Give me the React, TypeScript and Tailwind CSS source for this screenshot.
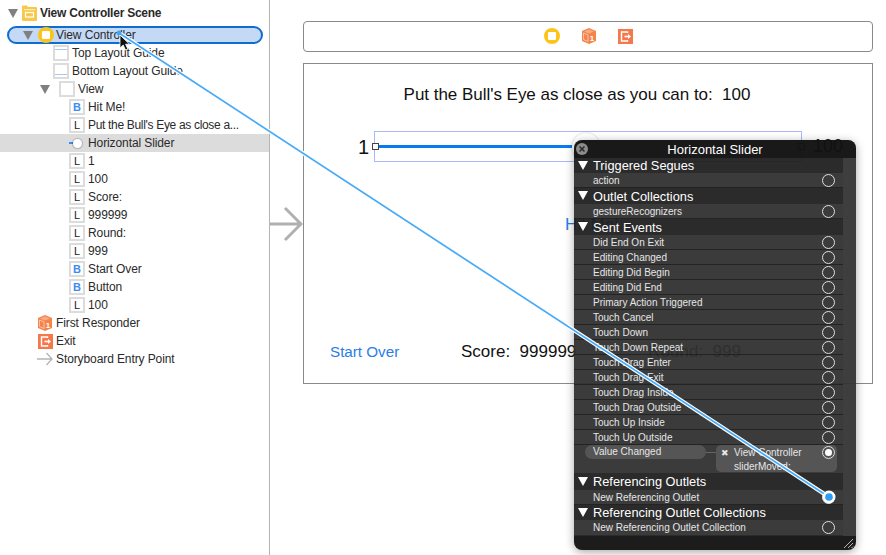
import React from 'react';

const Tri = ({ className = 'text-[#808080]' }: { className?: string }) => (
  <svg width="10" height="9" viewBox="0 0 10 9" className={`shrink-0 ${className}`}>
    <polygon points="0,0 10,0 5,9" fill="currentColor" />
  </svg>
);

const VcIcon = () => (
  <span className="w-[16px] h-[16px] shrink-0 rounded-full bg-[#fcc419] flex items-center justify-center">
    <span className="w-[8px] h-[8px] bg-white rounded-[1px]" />
  </span>
);

const CubeIcon = () => (
  <svg width="16" height="16" viewBox="0 0 16 16" className="shrink-0">
    <polygon points="8,0 15,3 15,13 8,16 1,13 1,3" fill="#f5834c" />
    <polygon points="8,1.5 13,3.4 8,5.4 3,3.4" fill="#f9ad84" />
    <polygon points="2.5,5 7,7 7,13.5 2.5,11.5" fill="none" stroke="#fbd2bb" strokeWidth="0.8" />
    <text x="11" y="13" fontSize="8" fontWeight="700" textAnchor="middle" fill="#fff" fontFamily="Liberation Sans, sans-serif">1</text>
  </svg>
);

const ExitIcon = () => (
  <svg width="15" height="15" viewBox="0 0 15 15" className="shrink-0">
    <rect width="15" height="15" fill="#f5784a" />
    <path d="M9.5 4V3H3.5V12H9.5V11" fill="none" stroke="#fff" strokeWidth="1.4" />
    <path d="M6.5 7.5H10.5" stroke="#fff" strokeWidth="1.6" />
    <polygon points="10,5 13,7.5 10,10" fill="#fff" />
  </svg>
);

const SceneIcon = () => (
  <svg width="15" height="16" viewBox="0 0 15 16" className="shrink-0">
    <path d="M1 0.5H5L6 2H14A1 1 0 0 1 15 3V15A1 1 0 0 1 14 16H1A1 1 0 0 1 0 15V1.5A1 1 0 0 1 1 0.5Z" fill="#f8c84a" />
    <rect x="2" y="4" width="11" height="1.2" fill="#fdeab5" />
    <rect x="3.5" y="7.5" width="8" height="4.5" fill="none" stroke="#fff" strokeWidth="1.2" />
  </svg>
);

const EntryArrow = () => (
  <svg width="16" height="14" viewBox="0 0 16 14" className="shrink-0">
    <path d="M0 7H15M9.5 1L15 7L9.5 13" fill="none" stroke="#b4b4b4" strokeWidth="1.3" />
  </svg>
);

const Box = ({ children }: { children?: React.ReactNode }) => (
  <span className="w-[16px] h-[16px] shrink-0 border-2 border-[#dcdcdc] bg-white flex items-center justify-center relative">
    {children}
  </span>
);

const LabelIcon = () => <Box><span className="text-[11px] leading-none text-[#222]">L</span></Box>;
const ButtonIcon = () => <Box><span className="text-[11px] leading-none font-bold text-[#3b8cf2]">B</span></Box>;
const GuideIcon = ({ bottom }: { bottom?: boolean }) => (
  <Box><span className={`absolute inset-x-0 h-[1px] bg-[#a9c8ec] ${bottom ? 'bottom-[2px]' : 'top-[2px]'}`} /></Box>
);
const SliderIcon = () => (
  <span className="w-[16px] h-[16px] shrink-0 flex items-center">
    <span className="w-[4px] h-[2px] bg-[#3b8cf2]" />
    <span className="w-[9px] h-[9px] rounded-full bg-white shadow-[0_0_1px_1px_rgba(0,0,0,0.2)]" />
  </span>
);

const Row = ({ pl, icon, label, tri, selected, tight }: { pl: string; icon: React.ReactNode; label: string; tri?: boolean; selected?: boolean; tight?: boolean }) => (
  <div className={`h-[18px] flex items-center gap-[3px] ${pl} ${selected ? 'bg-[#dcdcdc]' : ''}`}>
    {tri && <span className="mr-[6px]"><Tri /></span>}
    {icon}
    <span className={`whitespace-nowrap ${tight ? 'tracking-[-0.32px]' : ''}`}>{label}</span>
  </div>
);

const Outline = () => (
  <div className="w-[270px] shrink-0 border-r border-[#b4b4b4] pt-[4px] text-[12px] tracking-[-0.1px] text-[#2a2a2a] bg-white">
    <div className="h-[18px] mb-[4px] pl-[8px] flex items-center font-bold tracking-[-0.25px]">
      <span className="mr-[4px]"><Tri /></span>
      <SceneIcon />
      <span className="ml-[3px]">View Controller Scene</span>
    </div>
    <div className="h-[18px] ml-[7px] w-[256px] border-2 border-[#0f6cd0] rounded-[9px] bg-[#c4d9f6] flex items-center pl-[14px]">
      <Tri />
      <span className="ml-[5px]"><VcIcon /></span>
      <span className="ml-[2px]">View Controller</span>
    </div>
    <Row pl="pl-[53px]" icon={<GuideIcon />} label="Top Layout Guide" />
    <Row pl="pl-[53px]" icon={<GuideIcon bottom />} label="Bottom Layout Guide" />
    <Row pl="pl-[40px]" tri icon={<Box />} label="View" />
    <Row pl="pl-[69px]" icon={<ButtonIcon />} label="Hit Me!" />
    <Row pl="pl-[69px]" icon={<LabelIcon />} label="Put the Bull's Eye as close a..." tight />
    <Row pl="pl-[69px]" icon={<SliderIcon />} label="Horizontal Slider" selected />
    <Row pl="pl-[69px]" icon={<LabelIcon />} label="1" />
    <Row pl="pl-[69px]" icon={<LabelIcon />} label="100" />
    <Row pl="pl-[69px]" icon={<LabelIcon />} label="Score:" />
    <Row pl="pl-[69px]" icon={<LabelIcon />} label="999999" />
    <Row pl="pl-[69px]" icon={<LabelIcon />} label="Round:" />
    <Row pl="pl-[69px]" icon={<LabelIcon />} label="999" />
    <Row pl="pl-[69px]" icon={<ButtonIcon />} label="Start Over" />
    <Row pl="pl-[69px]" icon={<ButtonIcon />} label="Button" />
    <Row pl="pl-[69px]" icon={<LabelIcon />} label="100" />
    <Row pl="pl-[37px]" icon={<CubeIcon />} label="First Responder" />
    <Row pl="pl-[38px]" icon={<ExitIcon />} label="Exit" />
    <Row pl="pl-[37px]" icon={<EntryArrow />} label="Storyboard Entry Point" />
  </div>
);

const Scene = () => (
  <div className="flex-1 flex flex-col pt-[21px] min-w-0">
    <div className="ml-[33px] w-[570px] h-[31px] border border-[#8a8a8a] rounded-[4px] flex items-center justify-center gap-[21px] pb-[1px]">
      <VcIcon />
      <CubeIcon />
      <ExitIcon />
    </div>
    <div className="mt-[11px] flex items-center">
      <svg width="33" height="36" viewBox="0 0 33 36" className="shrink-0">
        <path d="M0 18H31M15 2L31 18L15 34" fill="none" stroke="#b0b0b0" strokeWidth="3" />
      </svg>
      <div className="w-[570px] h-[321px] border border-[#8a8a8a] flex flex-col items-center text-[#111] bg-white">
        <div className="mt-[20px] text-[17px] leading-[22px] tracking-[-0.03px] whitespace-nowrap pr-[22px]">
          Put the Bull's Eye as close as you can to:&nbsp; 100
        </div>
        <div className="mt-[25px] w-full flex items-center pl-[54px] h-[31px]">
          <span className="w-[16px] text-[20px] leading-none">1</span>
          <div className="relative w-[428px] h-[31px] border border-[#aab8fb] flex items-center shrink-0 -mr-[1px]">
            <span className="w-[7px] h-[7px] border border-[#444] bg-white -ml-[3px] shrink-0" />
            <span className="w-[194px] h-[3px] bg-[#0a7af0]" />
            <span className="absolute left-[197px] top-[1px] w-[28px] h-[28px] rounded-full bg-white shadow-[0_0_2px_rgba(0,0,0,0.25)]" />
            <span className="absolute right-[-4px] top-[11px] w-[7px] h-[7px] border border-[#444] bg-white" />
          </div>
          <span className="ml-[12px] -mt-[2px] text-[18px] leading-none">100</span>
        </div>
        <div className="mt-[52px] w-full pl-[261px] text-[17px] leading-[22px] text-[#2a7de9]">Hit Me!</div>
        <div className="mt-[106px] w-full flex items-center pl-[26px] leading-[20px] whitespace-nowrap">
          <span className="text-[#2a7de9] w-[131px] text-[15.2px]">Start Over</span>
          <span className="text-[17px]">Score:&nbsp; 999999</span>
          <span className="ml-[72px] text-[#222] text-[17px]">Round:&nbsp; 999</span>
        </div>
      </div>
    </div>
  </div>
);

const Circle = ({ on }: { on?: boolean }) => (
  <span className="w-[13px] h-[13px] shrink-0 rounded-full border-[1.5px] border-[#e0e0e0] flex items-center justify-center">
    {on && <span className="w-[7px] h-[7px] rounded-full bg-white" />}
  </span>
);

const EventRow = ({ label, last }: { label: string; last?: boolean }) => (
  <div className={`h-[15px] flex items-center justify-between pl-[19px] pr-[8px] bg-white/[0.08] ${last ? '' : 'border-b border-black/40'}`}>
    <span className="text-[10px] text-[#e6e6e6] whitespace-nowrap">{label}</span>
    <Circle />
  </div>
);

const Section = ({ title, h }: { title: string; h: string }) => (
  <div className={`${h} flex items-center pl-[4px] pt-[2px] text-[12.8px] leading-none text-white whitespace-nowrap overflow-hidden`}>
    <span className="mr-[5px] -mt-[3px]"><Tri className="text-white" /></span>
    {title}
  </div>
);

const sentEvents = [
  'Did End On Exit', 'Editing Changed', 'Editing Did Begin', 'Editing Did End', 'Primary Action Triggered',
  'Touch Cancel', 'Touch Down', 'Touch Down Repeat', 'Touch Drag Enter', 'Touch Drag Exit',
  'Touch Drag Inside', 'Touch Drag Outside', 'Touch Up Inside', 'Touch Up Outside',
];

const Popover = () => (
  <div className="absolute left-[574px] top-[140px] w-[282px] h-[410px] rounded-[8px] overflow-hidden bg-[#1e1e1e]/[0.94] shadow-[0_2px_10px_rgba(0,0,0,0.35)] flex flex-col">
    <div className="h-[18px] shrink-0 bg-black/40 flex items-center justify-center relative text-[13px] text-white pt-[1px]">
      <span className="absolute left-[2px] top-[3px] w-[12px] h-[12px] rounded-full bg-[#8c8c8c] flex items-center justify-center">
        <svg width="6" height="6" viewBox="0 0 6 6"><path d="M0.5 0.5L5.5 5.5M5.5 0.5L0.5 5.5" stroke="#2a2a2a" strokeWidth="1.5" /></svg>
      </span>
      Horizontal Slider
    </div>
    <div className="flex-1 flex min-h-0">
      <div className="w-[269px] shrink-0">
        <Section title="Triggered Segues" h="h-[15px]" />
        <EventRow label="action" />
        <Section title="Outlet Collections" h="h-[16px]" />
        <EventRow label="gestureRecognizers" />
        <Section title="Sent Events" h="h-[16px]" />
        {sentEvents.map(e => <EventRow key={e} label={e} />)}
        <div className="h-[28px] relative bg-white/[0.08] flex items-start pl-[11px]">
          <span className="w-[121px] h-[14px] rounded-[7px] bg-[#555] text-[10px] leading-[14px] pl-[8px] text-[#e6e6e6]">Value Changed</span>
          <span className="w-[10px] h-[1px] bg-[#666] mt-[7px]" />
          <div className="w-[121px] h-[27px] rounded-[5px] bg-[#555] text-[10px] leading-[14px] pt-[1px] text-[#e6e6e6] flex">
            <span className="w-[18px] text-center text-[9px]">✖</span>
            <span>View Controller<br />sliderMoved:</span>
          </div>
          <span className="absolute right-[8px] top-[1px]"><Circle on /></span>
        </div>
        <Section title="Referencing Outlets" h="h-[17px]" />
        <EventRow label="New Referencing Outlet" />
        <Section title="Referencing Outlet Collections" h="h-[15px]" />
        <EventRow label="New Referencing Outlet Collection" last />
      </div>
      <div className="flex-1 bg-white/[0.09]" />
    </div>
    <div className="h-[14px] shrink-0 bg-black/35 flex justify-end items-end pr-[2px] pb-[1px]">
      <svg width="11" height="11" viewBox="0 0 11 11">
        <path d="M1 10L10 1M5 10L10 5M8.5 10L10 8.5" stroke="#b5b5b5" strokeWidth="1" />
      </svg>
    </div>
  </div>
);

const Wire = () => (
  <svg className="absolute inset-0 w-[886px] h-[555px] pointer-events-none" viewBox="0 0 886 555">
    <line x1="119" y1="33" x2="829" y2="497" stroke="#fff" strokeWidth="4" />
    <line x1="119" y1="33" x2="829" y2="497" stroke="#45aaf8" strokeWidth="1.7" />
    <circle cx="119" cy="33" r="2.5" fill="#3ea6f7" />
    <circle cx="829" cy="497" r="6.5" fill="#fff" />
    <circle cx="829" cy="497" r="3.8" fill="#2e9bf5" />
    <path d="M120 35V48L123.2 45L125.5 50L127.8 49L125.6 44.2H129.5Z" fill="#111" stroke="#fff" strokeWidth="0.8" />
  </svg>
);

export default function App() {
  return (
    <div className="relative w-[886px] h-[555px] overflow-hidden bg-white flex font-['Liberation_Sans',sans-serif]">
      <Outline />
      <Scene />
      <Popover />
      <Wire />
    </div>
  );
}
